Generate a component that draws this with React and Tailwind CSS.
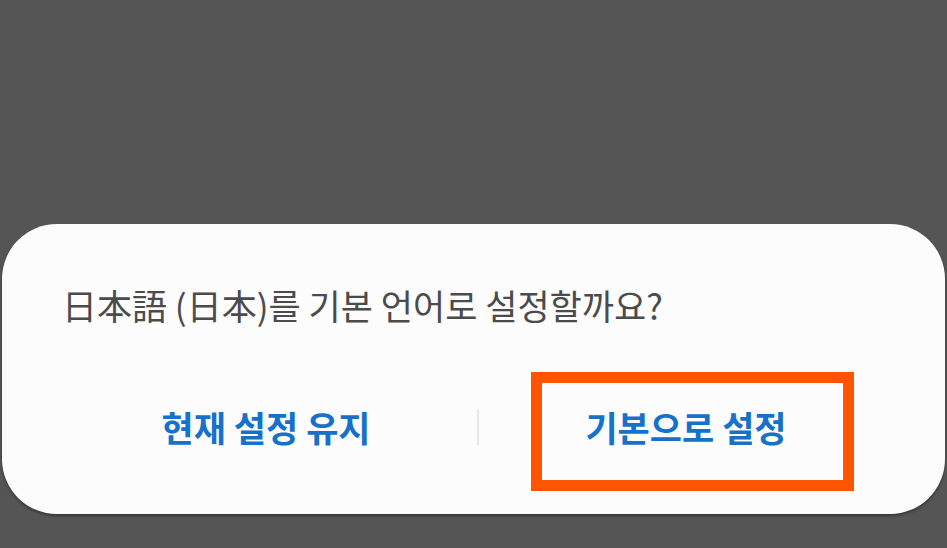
import React from 'react';

const FONT = { fontFamily: '"Noto Sans CJK KR", "Noto Sans CJK JP", "Noto Sans", sans-serif' };

export default function App() {
  return (
    <div className="h-[548px] w-[947px] overflow-hidden bg-[#555555] px-[2px] pt-[224px]" style={FONT}>
      {/* 다이얼로그 */}
      <div className="relative h-[290px] rounded-[55px] bg-[#fcfcfc] shadow-[0_2px_3px_rgba(0,0,0,0.35)]">
        <div className="pl-[60px] pt-[59px] text-[35px] leading-[44px] text-[#4b4b4b]">
          日本語 (日本)를 기본 언어로 설정할까요?
        </div>

        <div className="mt-[78px] flex items-center pl-[53px] pr-[52px]">
          <button className="w-[422px] text-center text-[35px] font-bold leading-[44px] text-[#1771c9]">
            현재 설정 유지
          </button>
          <div className="h-[36px] w-[2px] bg-[#e6e6e6]" />
          <button className="flex-1 text-center text-[35px] font-bold leading-[44px] text-[#1771c9]">
            기본으로 설정
          </button>
        </div>

        {/* 강조 표시 */}
        <div className="absolute left-[529px] top-[148px] h-[119px] w-[323px] border-[11px] border-[#ff5500]" />
      </div>
    </div>
  );
}
